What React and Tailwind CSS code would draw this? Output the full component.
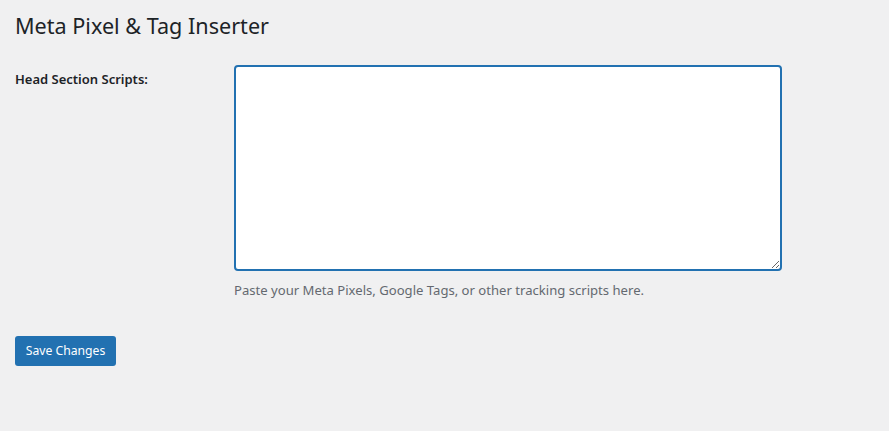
export default function App() {
  return (
    <div
      className="min-h-[431px] w-full bg-[#f0f0f1] pl-[15px] pt-[11px] text-[#1d2327]"
      style={{ fontFamily: '"Noto Sans", "Open Sans", sans-serif' }}
    >
      <h1 className="m-0 text-[21.6px] font-normal leading-[30px]">Meta Pixel &amp; Tag Inserter</h1>
      <div className="mt-[24px] flex">
        <label className="w-[219px] shrink-0 pt-[4px] text-[13px] font-semibold leading-[21px]">
          Head Section Scripts:
        </label>
        <div className="flex flex-col">
          <textarea className="h-[206px] w-[548px] rounded-[4px] border-2 border-[#2271b1] bg-white outline-none" />
          <p className="mt-[9px] text-[13.1px] leading-[21px] text-[#646970]">
            Paste your Meta Pixels, Google Tags, or other tracking scripts here.
          </p>
        </div>
      </div>
      <button className="mt-[35px] h-[30px] w-[101px] rounded-[3px] bg-[#2271b1] text-[12.2px] leading-[28px] text-white">
        Save Changes
      </button>
    </div>
  );
}
